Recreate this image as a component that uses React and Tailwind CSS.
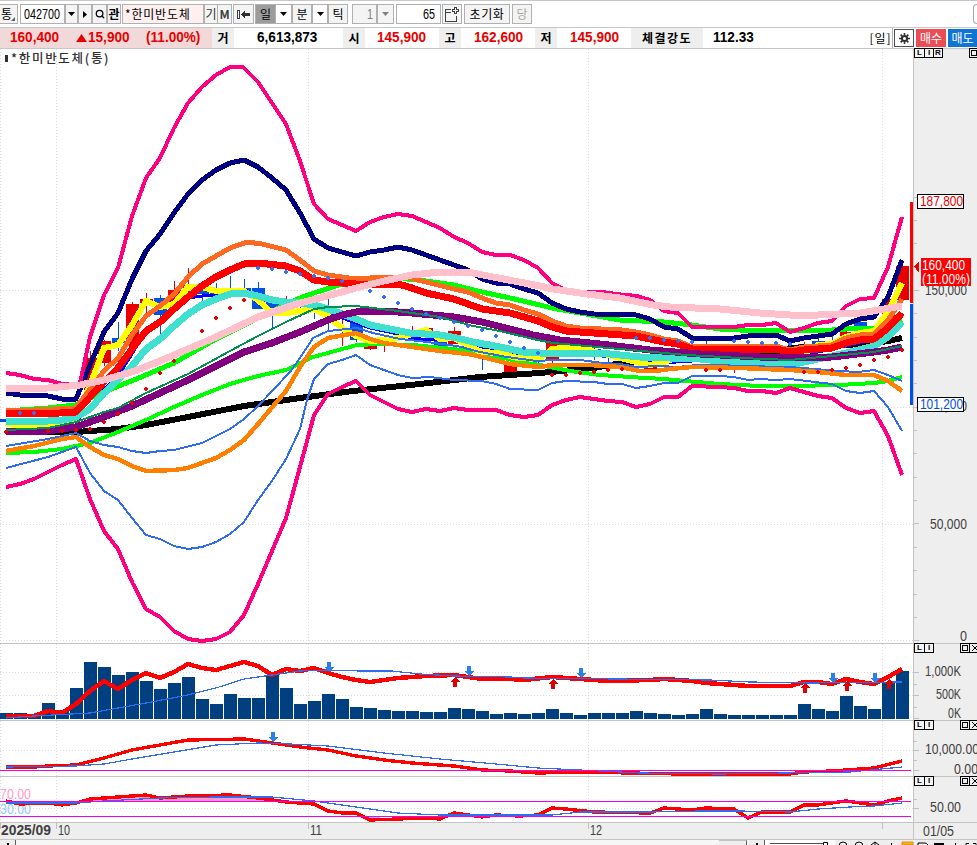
import { Search } from "lucide-react";

const BLUE = "#2f6cf0";

// bands and moving averages, painted in this order
const priceLines = [
  { color: "#00ff00", width: 5, points: "6,411 48,408 76,405 90,398 104,392 146,375 174,363 216,339 258,318 300,298 314,293 342,284 356,281 370,280 398,278 426,281 454,285 482,292 510,298 540,305 552,308 580,313 620,320 664,322 692,325 720,329 740,330 804,330 832,330 860,328 874,328 888,325 902,320" },
  { color: "#000000", width: 6, points: "6,432 76,432 118,429 146,425 188,417 244,406 300,398 353,391 420,384 480,377 540,373 594,368 610,365 640,361 680,356 720,353 776,352 790,348 832,346 874,343 888,341 902,338" },
  { color: "#00ff00", width: 4, points: "6,453 34,452 62,449 90,443 118,432 146,420 174,407 202,395 230,384 258,376 286,370 313,357 357,345 380,344 413,345 453,349 480,353 513,360 540,365 570,371 600,375 630,377 663,379 697,382 720,384 760,386 790,386 840,385 874,383 888,381 902,377" },
  { color: "#0000ff", width: 3, points: "6,421 76,422 90,406 104,390 118,376 132,354 146,330 160,321 174,309 188,298 202,296 216,295 230,289 244,289 258,297 272,300 300,304 328,311 342,318 356,323 370,328 398,334 412,338 430,340 454,337 482,347 510,354 538,355 552,351 580,351 604,351 636,359 660,363 692,361 740,360 790,363 818,352 846,346 874,340 888,330 902,315" },
  { color: "#ffff00", width: 6, points: "6,423 20,427 34,427 48,424 76,420 83,403 97,367 104,348 118,345 132,325 146,301 160,307 174,304 188,287 202,287 216,291 244,291 258,300 272,313 286,313 314,309 328,316 342,328 356,336 370,341 384,340 398,338 426,330 440,339 454,338 468,345 480,352 500,353 517,358 540,359 552,349 575,347 600,353 620,358 640,363 650,365 664,362 680,357 740,364 790,363 804,353 818,345 832,344 846,337 860,333 874,331 888,312 902,283" },
  { color: "#40e0d0", width: 7, points: "6,421 34,422 62,420 76,417 90,409 104,393 118,380 132,366 146,349 160,339 174,326 188,314 202,305 216,299 230,294 244,293 258,296 272,300 286,302 300,303 314,305 328,309 342,314 356,319 370,325 390,329 410,333 440,335 457,338 473,342 500,347 523,352 540,353 566,353 600,353 620,355 640,357 700,359 740,363 776,364 790,365 804,362 832,356 846,353 874,346 888,337 902,322" },
  { color: "#000080", width: 5, points: "6,393 20,395 48,396 62,399 76,399 90,365 104,332 118,313 132,279 146,251 160,234 174,213 188,194 202,180 216,170 230,163 244,160 258,167 272,178 286,190 300,213 314,239 328,248 342,252 356,256 370,252 384,250 398,247 412,250 426,255 440,260 454,265 468,270 482,279 496,283 510,284 524,289 538,293 552,303 566,309 580,312 594,314 636,315 650,319 664,327 678,329 692,338 734,338 748,336 776,335 790,341 804,338 832,334 846,324 860,319 874,317 888,297 902,260" },
  { color: "#ff6820", width: 5, points: "6,410 34,410 76,408 90,389 104,371 118,358 132,335 146,316 160,306 174,294 188,277 202,264 216,256 230,248 247,242 262,244 286,250 300,260 314,271 328,275 356,279 384,277 410,278 430,283 454,289 468,292 482,298 496,303 510,305 524,310 538,314 552,321 566,326 580,328 622,330 636,332 650,335 664,339 678,341 692,347 776,346 790,350 804,347 832,345 846,338 860,335 874,334 888,320 902,299" },
  { color: "#ff0000", width: 7, points: "6,414 60,413 76,412 90,397 104,382 118,368 132,349 146,331 160,322 174,309 188,297 202,286 216,277 230,270 244,264 258,263 286,266 300,271 314,280 328,282 356,284 398,284 412,288 426,293 454,299 482,309 510,313 538,321 552,327 566,331 608,334 636,336 650,339 664,342 678,344 692,349 776,349 790,352 804,350 832,348 846,343 860,340 874,339 888,328 902,313" },
  { color: "#ff0080", width: 4, points: "6,373 20,375 34,379 48,380 62,384 76,384 80,383 90,337 104,295 118,268 132,216 146,178 160,158 174,128 188,103 202,87 216,75 230,67 243,67 258,82 272,103 286,124 300,161 314,204 328,219 342,225 356,231 370,222 384,217 398,214 412,216 426,222 440,228 454,237 468,243 482,252 496,255 510,255 524,260 538,268 552,283 566,290 580,292 602,292 616,294 637,296 650,300 664,311 678,313 692,327 734,327 748,325 762,325 776,323 790,332 804,328 818,323 832,321 846,306 860,299 874,298 888,267 902,217" },
  { color: "#ff0080", width: 4, points: "6,487 20,484 34,479 48,472 62,465 76,459 90,499 104,531 118,549 132,582 146,609 160,617 174,631 188,639 202,641 216,639 230,632 244,615 258,584 272,551 286,518 300,467 314,415 328,394 342,387 356,381 370,395 384,402 398,409 412,412 426,409 440,411 454,408 468,410 496,410 510,415 524,417 538,415 552,405 566,400 580,397 594,399 608,401 622,402 636,407 650,404 664,397 678,397 692,386 720,387 734,388 748,391 762,391 776,393 790,388 804,392 818,396 832,398 846,408 860,413 874,411 888,436 902,475" },
  { color: "#ffc0cb", width: 7, points: "6,389 48,388 80,385 104,380 132,372 160,361 188,349 216,337 258,317 300,303 320,298 356,288 384,281 412,275 440,272 468,272 493,277 540,286 553,289 587,294 620,298 653,305 670,307 720,309 760,313 790,315 818,315 860,313 902,306" },
  { color: "#800080", width: 7, points: "6,432 48,431 76,427 104,417 132,406 160,393 188,380 216,366 244,352 272,343 300,332 314,326 328,320 342,315 356,312 384,311 412,313 454,317 482,322 510,329 533,335 560,340 600,344 650,350 700,354 760,357 790,358 832,357 874,352 888,350 902,347" },
  { color: "#009050", width: 2, points: "6,430 48,428 76,422 104,412 118,408 146,393 188,374 230,351 258,336 286,322 314,309 328,307 356,306 398,311 440,317 473,326 500,331 533,339 553,343 620,349 687,355 740,358 790,360 832,356 874,352 888,349 902,346" },
  { color: BLUE, width: 2, points: "6,446 48,439 76,433 90,441 104,445 118,447 132,451 146,453 160,451 174,450 202,443 230,429 244,419 258,406 290,372 300,358 313,338 328,331 357,328 373,333 400,339 427,342 457,346 480,352 507,357 537,361 553,360 580,360 603,363 620,364 637,367 660,366 677,367 697,365 720,365 740,366 790,367 840,371 858,372 874,370 888,375 902,381" },
  { color: BLUE, width: 2, points: "6,468 48,457 76,447 90,473 104,491 118,500 132,518 146,535 160,539 174,546 188,549 202,547 216,542 230,534 244,522 258,500 272,481 286,459 300,429 307,400 314,379 328,364 342,360 356,355 370,365 398,375 412,378 430,377 454,380 482,381 496,384 510,389 538,390 552,383 566,381 594,382 608,384 622,384 636,388 650,386 664,383 678,383 692,376 720,376 734,377 748,380 760,379 776,380 790,379 832,384 846,391 860,393 874,391 888,407 902,431" },
  { color: "#ff8000", width: 4.5, points: "6,451 34,446 62,439 76,437 90,447 104,455 118,459 132,466 146,471 174,470 188,468 216,458 230,450 244,440 258,424 286,391 300,367 314,347 328,338 356,333 370,339 384,343 412,347 426,349 440,351 468,354 482,357 510,364 540,367 552,365 590,365 620,367 640,371 655,371 670,369 692,367 740,368 790,370 818,372 846,375 874,375 888,381 902,391" },
];

const blueDots = [
  [20, 413], [34, 413], [258, 268], [272, 269], [286, 272], [300, 274], [314, 276], [328, 278], [342, 281],
  [370, 291], [384, 297], [398, 303], [412, 309], [426, 314], [440, 318], [454, 322], [468, 326], [482, 330],
  [496, 336], [510, 342], [524, 348], [538, 353], [636, 338], [650, 338], [664, 340], [678, 341], [692, 342],
  [734, 341], [748, 342], [762, 343], [776, 343], [790, 344],
];

const redDots = [
  [6, 432], [48, 431], [62, 431], [76, 430], [90, 429], [104, 422], [118, 414], [132, 403], [146, 389],
  [160, 373], [174, 361], [202, 331], [216, 318], [230, 308], [244, 300], [552, 375], [566, 375], [580, 373],
  [594, 372], [608, 370], [622, 369], [706, 370], [720, 370], [804, 372], [818, 372], [832, 370], [846, 368],
  [860, 365], [874, 360], [888, 357], [902, 350],
];

// x, high, low, body top, body bottom, up?
const candles = [
  [0, 419, 422, 419, 422, 0],
  [90, 351, 390, 358, 390, 1],
  [104, 340, 366, 341, 363, 1],
  [118, 322, 351, 338, 343, 0],
  [132, 302, 346, 304, 346, 1],
  [146, 293, 313, 299, 303, 1],
  [160, 295, 334, 298, 315, 0],
  [174, 281, 305, 290, 303, 1],
  [188, 268, 292, 285, 288, 1],
  [202, 290, 303, 291, 294, 0],
  [216, 283, 297, 292, 295, 0],
  [230, 276, 292, 288, 291, 0],
  [244, 279, 294, 288, 294, 0],
  [258, 282, 309, 288, 309, 0],
  [272, 300, 330, 301, 309, 0],
  [286, 296, 309, 303, 305, 1],
  [300, 303, 317, 304, 306, 0],
  [314, 303, 319, 305, 307, 0],
  [328, 298, 330, 312, 315, 0],
  [342, 318, 346, 329, 331, 1],
  [356, 320, 342, 323, 340, 0],
  [370, 340, 350, 345, 349, 1],
  [384, 340, 352, 341, 343, 1],
  [412, 326, 338, 335, 337, 1],
  [426, 328, 340, 328, 331, 1],
  [440, 335, 347, 340, 346, 0],
  [454, 327, 344, 331, 344, 1],
  [468, 340, 352, 343, 352, 0],
  [482, 350, 370, 353, 356, 0],
  [496, 348, 360, 349, 352, 0],
  [510, 355, 372, 364, 372, 1],
  [538, 350, 365, 355, 358, 0],
  [552, 340, 366, 341, 359, 1],
  [594, 346, 360, 349, 352, 0],
  [608, 350, 364, 356, 358, 0],
  [650, 355, 372, 366, 370, 1],
  [706, 341, 352, 349, 351, 0],
  [734, 360, 373, 364, 367, 1],
  [804, 342, 354, 344, 347, 1],
  [818, 337, 350, 341, 344, 0],
  [832, 335, 348, 341, 345, 0],
  [846, 330, 345, 332, 342, 1],
  [860, 320, 333, 322, 333, 0],
  [888, 299, 322, 299, 322, 1],
  [902, 266, 300, 266, 300, 1],
];

const volumeTops = [
  713, 713, 716, 703, 710, 688, 662, 667, 675, 672, 681, 689, 683, 677, 699, 704, 694, 698, 698, 675, 688, 704,
  701, 694, 699, 707, 708, 710, 711, 711, 712, 712, 708, 709, 711, 714, 713, 714, 713, 709, 713, 715, 713, 713,
  713, 711, 713, 714, 715, 714, 709, 714, 715, 715, 715, 715, 715, 704, 709, 711, 696, 706, 709, 683, 671,
];

const obv = "6,716 34,716 48,711 62,713 76,704 90,691 104,681 118,689 132,680 146,673 160,678 174,672 188,664 202,668 216,670 230,666 244,662 258,666 272,675 286,669 300,671 314,668 328,673 342,677 356,680 370,682 384,680 398,678 426,676 454,675 482,679 510,679 524,680 552,677 580,679 608,681 650,680 664,679 692,681 706,683 748,686 790,686 804,682 818,682 832,684 846,679 860,682 874,684 888,677 902,669";
const obvSignal = "6,718 34,716 90,713 146,703 188,695 216,688 244,679 272,675 300,671 328,670 360,671 392,671 420,674 454,676 510,677 524,678 710,680 750,682 810,683 902,682";
const macd = "6,767 34,767 48,766 76,765 104,758 132,750 160,745 188,740 244,739 272,743 300,747 328,750 356,756 384,760 412,763 454,766 482,770 510,771 538,773 580,772 630,773 680,774 700,774 790,774 804,772 832,771 860,769 874,768 902,761";
const macdSignal = "6,767 76,766 104,764 132,759 174,752 216,745 258,743 290,744 328,746 384,753 440,759 496,764 538,768 580,770 640,773 720,774 850,772 902,767";
const rsi = "6,801 20,804 48,803 62,805 76,803 90,799 118,797 146,795 160,798 188,796 230,795 258,798 286,802 314,804 328,811 342,813 356,813 370,820 398,819 426,818 440,819 454,813 482,817 496,815 520,816 538,815 552,808 566,809 594,812 650,813 664,808 692,810 706,808 734,809 748,818 762,812 790,812 804,805 818,805 846,801 874,805 888,801 902,798";
const rsiSignal = "6,803 76,803 104,801 160,798 216,797 272,797 314,801 356,807 398,813 440,815 552,815 580,812 650,812 700,811 740,811 790,812 818,809 850,807 874,806 902,803";

const months = [0, 56, 308, 588, 882];

const Line = ({ points, color, width }) => (
  <polyline points={points} fill="none" stroke={color} strokeWidth={width} strokeLinejoin="round" />
);

const Dot = ({ x, y, color }) => (
  <path d={`M${x - 1} ${y - 2}h2v1h1v2h-1v1h-2v-1h-1v-2h1z`} fill={color} />
);

const Arrow = ({ x, y, down }) => (
  <path
    d={down ? `M${x - 1} ${y}h4v5h3l-5 5l-5 -5h3z` : `M${x - 1} ${y + 10}h4v-5h3l-5 -5l-5 5h3z`}
    fill={down ? "#2a80e8" : "#e00000"}
  />
);

const Grid = ({ top, bottom, rows }) => (
  <g stroke="#dcdcdc" strokeDasharray="1 2">
    {months.map((x) => (
      <path key={x} d={`M${x + 0.5} ${top}V${bottom}`} />
    ))}
    {rows.map((y) => (
      <path key={y} d={`M0 ${y + 0.5}H913`} />
    ))}
  </g>
);

const AxisText = ({ x, y, w, color = "#404040", children }) => (
  <text
    x={x}
    y={y}
    textLength={w}
    lengthAdjust="spacingAndGlyphs"
    fill={color}
    className="font-['Liberation_Sans',sans-serif] text-[14px]"
  >
    {children}
  </text>
);

const Ticks = ({ ys, long = [] }) => (
  <g stroke="#c0c0c0">
    {ys.map((y) => (
      <path key={y} d={`M914 ${y + 0.5}h3`} />
    ))}
    {long.map((y) => (
      <path key={y} d={`M914 ${y + 0.5}h5`} />
    ))}
  </g>
);

const PanelButtons = ({ letters, wide }) => (
  <div className={`absolute -top-px left-0 flex h-[10px] justify-between ${wide ? "w-[75px]" : "w-[66px]"}`}>
    <div className="flex border border-black bg-[#f4f4f4] font-['Liberation_Sans',sans-serif] text-[8px] leading-[8px] font-bold">
      {letters.map((l, i) => (
        <span key={l} className={i ? "w-[9px] border-l border-black text-center" : "w-[9px] text-center"}>
          {l}
        </span>
      ))}
    </div>
    <svg width="20" height="10" viewBox="0 0 20 10" fill="none" stroke="#000" shapeRendering="crispEdges">
      <path d="M.5 .5h19v9h-19zM9.5 .5v9M2.5 2.5h5v5h-5zM12 2l6 6M18 2l-6 6" />
    </svg>
  </div>
);

const Panel = ({ top, height, letters, axis, wide, children }) => (
  <div className="box-content flex border-b border-[#c4c4c4]" style={{ height }}>
    <svg width="913" height={height} viewBox={`0 ${top} 913 ${height}`} shapeRendering="crispEdges" className="shrink-0">
      {children}
    </svg>
    <div className="relative w-16 shrink-0 border-l border-[#c4c4c4] bg-[#eeeeee]">
      <svg width="63" height={height} viewBox={`914 ${top} 63 ${height}`} shapeRendering="crispEdges">
        {axis}
      </svg>
      <PanelButtons letters={letters} wide={wide} />
    </div>
  </div>
);

const Btn = ({ className = "", children }) => (
  <div className={`flex h-5 shrink-0 items-center justify-center overflow-hidden border border-[#b0b0b0] bg-[#f4f4f4] text-[12px] leading-none whitespace-nowrap ${className}`}>
    {children}
  </div>
);

const Caret = ({ color = "#000" }) => (
  <svg width="7" height="4" viewBox="0 0 7 4" fill={color}>
    <path d="M0 0h7L3.5 4z" />
  </svg>
);

const Narrow = ({ className = "", children }) => (
  <span className={`inline-block origin-left scale-x-[0.77] font-['Liberation_Sans',sans-serif] text-[14px] ${className}`}>
    {children}
  </span>
);

const Bold = ({ className = "", children }) => (
  <span className={`flex h-5 shrink-0 items-center pb-[2px] whitespace-nowrap ${className}`}>
    <span className="inline-block origin-left scale-x-[0.97] font-['Liberation_Sans',sans-serif] text-[14px] leading-none font-bold">
      {children}
    </span>
  </span>
);

const Label = ({ className = "", children }) => (
  <span className={`flex h-5 shrink-0 items-center justify-center bg-[#eeeeee] text-[12px] font-bold text-black ${className}`}>
    {children}
  </span>
);

const Toolbar = () => (
  <div className="flex h-7 shrink-0 items-start border-t border-b border-[#c8c8c8] pt-[3px]">
    <Btn className="relative w-[18px] border-l-0 pr-1">
      통
      <span className="absolute right-0.5 bottom-0.5 size-1 bg-[#606060] [clip-path:polygon(100%_0,100%_100%,0_100%)]" />
    </Btn>
    <Btn className="ml-[2px] w-[45px] justify-start! bg-white pl-[3px]">
      <Narrow>042700</Narrow>
    </Btn>
    <Btn className="w-[13px] border-[#909090]"><Caret /></Btn>
    <Btn className="w-[14px] border-[#909090]">
      <svg width="4" height="7" viewBox="0 0 4 7"><path d="M0 0v7l4-3.5z" /></svg>
    </Btn>
    <Btn className="w-[15px] border-[#909090]"><Search size={10} strokeWidth={3} /></Btn>
    <Btn className="w-[14px] border-[#909090] text-[11px] font-bold">관</Btn>
    <Btn className="ml-px w-[82px] justify-start! bg-[#fff0f0] pl-[2px] text-[12.5px] tracking-[0.8px]">*한미반도체</Btn>
    <Btn className="w-[14px] text-[#303030]">기</Btn>
    <Btn className="w-[14px] border-l-0 text-[11px] font-bold text-[#404040]">M</Btn>
    <Btn className="ml-px w-[21px]">
      <svg width="13" height="9" viewBox="0 0 13 9" shapeRendering="crispEdges">
        <path d="M.5.5h2v8h-2z" fill="none" stroke="#404040" />
        <path d="M4 4.5L8 0v3h5v3H8v3z" fill="#303030" />
      </svg>
    </Btn>
    <Btn className="ml-px w-[21px] border-[#505050] bg-[#9c9c9c]!">일</Btn>
    <Btn className="w-4 border-l-0 border-[#505050] bg-white"><Caret /></Btn>
    <Btn className="w-5">분</Btn>
    <Btn className="w-4 border-[#505050] bg-white"><Caret /></Btn>
    <Btn className="w-5">틱</Btn>
    <Btn className="ml-1 w-[25px] justify-end! bg-[#eeeeee] pr-px text-[#808080]">
      <Narrow>1</Narrow>
    </Btn>
    <Btn className="w-[17px] border-[#808080] bg-[#e8e8e8]"><Caret color="#808080" /></Btn>
    <Btn className="ml-[2px] w-[45px] justify-start! bg-white! pl-[26px]">
      <Narrow>65</Narrow>
    </Btn>
    <Btn className="ml-px w-5">
      <svg width="14" height="15" viewBox="0 0 14 15" fill="none" stroke="#404040" shapeRendering="crispEdges">
        <path d="M6 2.5H.5v12h11V9M1 5.5h5" />
        <path d="M9.5.5h2v2h2v2h-2v2h-2v-2h-2v-2h2z" />
      </svg>
    </Btn>
    <Btn className="ml-[2px] w-[46px] tracking-[0.6px]">초기화</Btn>
    <Btn className="ml-[2px] w-5 text-[#aca899]">당</Btn>
    <div className="ml-auto h-5 w-1 rounded-l border border-r-0 border-[#a0a8b8]" />
  </div>
);

const QuoteBar = () => (
  <div className="flex h-[21px] shrink-0 items-center overflow-hidden border-b border-[#c8c8c8]">
    <div className="flex h-5 w-[212px] shrink-0 items-center bg-[#f2d9d9] pl-[10px] text-[#e60000]">
      <Bold className="w-[66px]">160,400</Bold>
      <svg width="11" height="8" viewBox="0 0 11 8" fill="#e60000"><path d="M5.5 0L11 8H0z" /></svg>
      <Bold className="w-[59px] pl-px">15,900</Bold>
      <Bold>(11.00%)</Bold>
    </div>
    <Label className="w-[22px]">거</Label>
    <Bold className="w-[109px] pl-[23px]">6,613,873</Bold>
    <Label className="w-[22px]">시</Label>
    <Bold className="w-[74px] pl-3 text-[#e60000]">145,900</Bold>
    <Label className="w-[22px]">고</Label>
    <Bold className="w-[74px] pl-[13px] text-[#e60000]">162,600</Bold>
    <Label className="w-[22px]">저</Label>
    <Bold className="w-[74px] pl-[13px] text-[#e60000]">145,900</Bold>
    <Label className="w-[72px]"><span className="tracking-[1.4px]">체결강도</span></Label>
    <Bold className="pl-[10px]">112.33</Bold>
    <span className="ml-auto flex h-5 w-[24px] shrink-0 items-center justify-center border-r border-[#b0b0b0] text-[12px] tracking-[1px]">[일]</span>
    <div className="ml-px flex h-[18px] w-5 shrink-0 items-center justify-center border border-[#505050]">
      <svg width="11" height="11" viewBox="0 0 11 11" fill="none" stroke="#303030">
        <circle cx="5.5" cy="5.5" r="2.6" strokeWidth="2" />
        <path d="M5.5 0v2M5.5 9v2M0 5.5h2M9 5.5h2M1.6 1.6l1.6 1.6M7.8 7.8l1.6 1.6M9.4 1.6L7.8 3.2M3.2 7.8L1.6 9.4" strokeWidth="1.6" />
      </svg>
    </div>
    <div className="ml-[2px] flex h-[18px] w-[30px] shrink-0 items-center justify-center bg-[#ec4c54] text-[12px] text-white">매수</div>
    <div className="ml-[2px] flex h-[18px] w-[29px] shrink-0 items-center justify-center bg-[#1074d4] text-[12px] text-white">매도</div>
  </div>
);

const PriceAxis = (
  <>
    <Ticks
      ys={[197, 220, 243, 267, 313, 337, 360, 383, 430, 453, 477, 500, 547, 570, 594, 617]}
      long={[290, 407, 523, 640]}
    />
    <AxisText x={925} y={294.5} w={42}>150,000</AxisText>
    <AxisText x={925} y={411} w={42}>100,000</AxisText>
    <AxisText x={930} y={528.5} w={37}>50,000</AxisText>
    <AxisText x={960} y={641} w={7}>0</AxisText>
    <path d="M917.5 194.5h46v14h-46z" fill="#fff" stroke="#000" />
    <AxisText x={920} y={206} w={43} color="#e60000">187,800</AxisText>
    <path d="M917.5 397.5h46v14h-46z" fill="#fff" stroke="#000" />
    <AxisText x={920} y={409} w={43} color="#0050e0">101,200</AxisText>
    <path d="M914 266.5l5-5v11z" fill="#e60000" />
    <path d="M921 258h50v28h-50z" fill="#ff0000" />
    <AxisText x={922} y={270} w={43} color="#fff">160,400</AxisText>
    <AxisText x={922} y={284} w={48} color="#fff">(11.00%)</AxisText>
  </>
);

const App = () => {
  return (
    <div className="flex h-[845px] w-[977px] flex-col overflow-hidden bg-white font-['Noto_Sans_CJK_KR',sans-serif] text-black">
      <Toolbar />
      <QuoteBar />

      <div className="relative">
        <Panel top={49} height={594} letters={["L", "I", "R"]} axis={PriceAxis} wide>
          <Grid top={49} bottom={643} rows={[290, 407, 524, 640]} />
          {candles.map(([x, high, low, top, bottom, up]) => (
            <g key={x} fill={up ? "#e60000" : "#0050e6"}>
              <rect x={x} y={high} width="1" height={low - high} />
              <rect x={x - 6} y={top} width="13" height={bottom - top} />
            </g>
          ))}
          {priceLines.map((line, i) => (
            <Line key={i} {...line} />
          ))}
          {blueDots.map(([x, y]) => (
            <Dot key={x} x={x} y={y} color="#3370f5" />
          ))}
          {redDots.map(([x, y]) => (
            <Dot key={x} x={x} y={y} color="#e60000" />
          ))}
          <path d="M910 202h3v101h-3z" fill="#ff0000" />
          <path d="M910 304h3v101h-3z" fill="#0050e6" />
        </Panel>
        <div className="absolute top-px left-[5px] flex items-center gap-[3px] text-[12.5px] leading-4 font-medium text-[#303030]">
          <span className="h-[7px] w-[3px] bg-[#303030]" />
          <span className="tracking-[1.7px]">*한미반도체(통)</span>
        </div>
      </div>

      <Panel
        top={644}
        height={76}
        letters={["L", "I"]}
        axis={
          <>
            <Ticks ys={[684, 707]} long={[672, 695, 718]} />
            <AxisText x={925} y={676} w={36}>1,000K</AxisText>
            <AxisText x={936} y={699} w={25}>500K</AxisText>
            <AxisText x={948} y={718} w={13}>0K</AxisText>
          </>
        }
      >
        <Grid top={644} bottom={720} rows={[672, 695]} />
        {volumeTops.map((y, i) => (
          <rect key={i} x={i * 14} y={y} width="13" height={719 - y} fill="#004080" />
        ))}
        <Line points={obv} color="#ff0000" width={4.5} />
        <Line points={obvSignal} color={BLUE} width={1.2} />
        {[[328, 662], [468, 666], [580, 668], [832, 673], [874, 673]].map(([x, y]) => (
          <Arrow key={x} x={x} y={y} down />
        ))}
        {[[454, 677], [552, 679], [804, 683], [846, 681], [888, 679]].map(([x, y]) => (
          <Arrow key={x} x={x} y={y} />
        ))}
      </Panel>

      <Panel
        top={721}
        height={55}
        letters={["L", "I"]}
        axis={
          <>
            <Ticks ys={[741, 760]} long={[750, 770]} />
            <AxisText x={925} y={754} w={54}>10,000.00</AxisText>
            <AxisText x={954} y={774} w={24}>0.00</AxisText>
          </>
        }
      >
        <Grid top={721} bottom={776} rows={[750]} />
        <Line points={macd} color="#ff0000" width={3.4} />
        <Line points={macdSignal} color={BLUE} width={1.2} />
        <path d="M0 770.5H911" stroke="#f000f0" />
        <Arrow x={272} y={732} down />
      </Panel>

      <Panel
        top={777}
        height={45}
        letters={["L", "I"]}
        axis={
          <>
            <Ticks ys={[799]} long={[808]} />
            <AxisText x={930} y={812} w={31}>50.00</AxisText>
          </>
        }
      >
        <Grid top={777} bottom={822} rows={[808]} />
        <AxisText x={0} y={799} w={31} color="#ff9ac8">70.00</AxisText>
        <AxisText x={0} y={814} w={31} color="#90c8ff">30.00</AxisText>
        <path d="M84 801L90 799L118 797L146 795L160 798L188 796L230 795L258 798L280 801z" fill="#ff9ac8" />
        <path d="M364 817H380V819H370z" fill="#90c8ff" />
        <Line points={rsi} color="#ff0000" width={3.4} />
        <Line points={rsiSignal} color={BLUE} width={1.2} />
        <path d="M0 801.5H911M0 816.5H911" stroke="#f000f0" />
      </Panel>

      <div className="flex h-[17px] shrink-0 border-b border-[#c4c4c4] bg-[#eeeeee]">
        <svg width="913" height="16" viewBox="0 823 913 16" className="shrink-0">
          <path d="M.5 823v6M56.5 823v6M308.5 823v6M588.5 823v6M882.5 823v6" stroke="#c0c0c0" />
          <text x="1" y="835" textLength="50" lengthAdjust="spacingAndGlyphs" fill="#404040" className="font-['Liberation_Sans',sans-serif] text-[14px] font-bold">
            2025/09
          </text>
          <AxisText x={58} y={835} w={12}>10</AxisText>
          <AxisText x={310} y={835} w={12}>11</AxisText>
          <AxisText x={590} y={835} w={12}>12</AxisText>
        </svg>
        <div className="w-16 shrink-0 border-l border-[#c4c4c4]">
          <svg width="63" height="16" viewBox="914 823 63 16">
            <AxisText x={923} y={836} w={31}>01/05</AxisText>
          </svg>
        </div>
      </div>

      <div className="flex h-[5px] shrink-0 overflow-hidden bg-[#f6f6f6]">
        <div className="flex w-4 items-end justify-center border-r border-[#606060] bg-[#eeeeee]">
          <span className="size-[2px] bg-black" />
        </div>
        <div className="ml-[703px] w-7 border-t border-r border-[#606060] border-t-[#c4c4c4] bg-[#eeeeee]" />
        <div className="ml-[2px] flex w-4 items-end justify-center border-r border-[#606060] bg-[#eeeeee]">
          <span className="size-[2px] bg-black" />
        </div>
        <svg width="212" height="5" viewBox="765 840 212 5" fill="none" stroke="#000" className="bg-[#eeeeee]">
          <path d="M765 840h70v5h-70z" fill="#fff" stroke="none" />
          <path d="M770 843.5h54" stroke="#505050" />
          <path d="M823.5 845v-2.5h4v2.5" />
          <circle cx="843" cy="846" r="4" />
          <circle cx="859" cy="846" r="4" />
          <path d="M871 845l4-3l4 3M875 842v3M891.5 843v2M955.5 843v2M966 845v-1.5h3M973 843.5h3v1.5" />
          <path d="M902 842h11v3h-11z" fill="#f0b020" stroke="#e09010" />
          <path d="M918 845v-2h6a4 4 0 0 1 4 2" />
          <path d="M934 843h10v2h-10z" fill="#000" stroke="none" />
        </svg>
      </div>
    </div>
  );
};

export default App;
